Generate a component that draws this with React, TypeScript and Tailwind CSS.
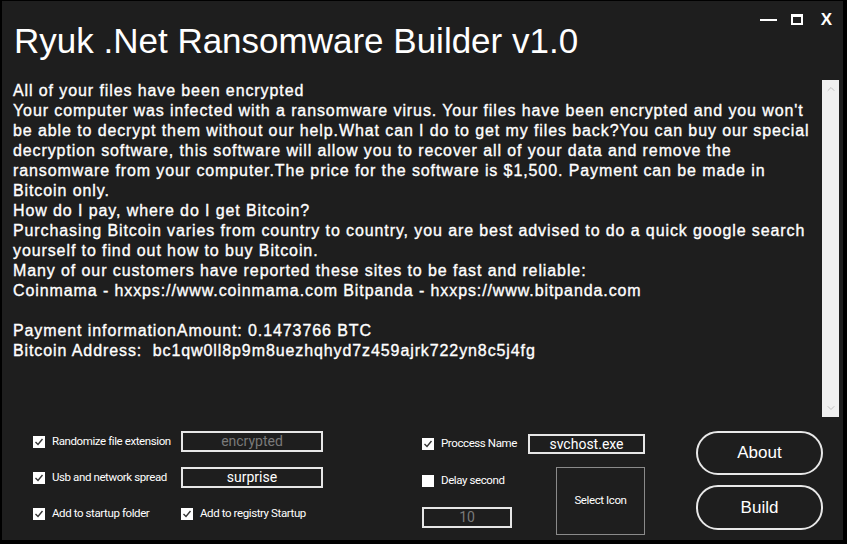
import { ChevronUp, ChevronDown } from 'lucide-react';

const message = [
  'All of your files have been encrypted',
  "Your computer was infected with a ransomware virus. Your files have been encrypted and you won't",
  'be able to decrypt them without our help.What can I do to get my files back?You can buy our special',
  'decryption software, this software will allow you to recover all of your data and remove the',
  'ransomware from your computer.The price for the software is $1,500. Payment can be made in',
  'Bitcoin only.',
  'How do I pay, where do I get Bitcoin?',
  'Purchasing Bitcoin varies from country to country, you are best advised to do a quick google search',
  'yourself to find out how to buy Bitcoin.',
  'Many of our customers have reported these sites to be fast and reliable:',
  'Coinmama - hxxps://www.coinmama.com Bitpanda - hxxps://www.bitpanda.com',
  '',
  'Payment informationAmount: 0.1473766 BTC',
  'Bitcoin Address:  bc1qw0ll8p9m8uezhqhyd7z459ajrk722yn8c5j4fg',
];

function CheckBox({ checked, label }: { checked: boolean; label: string }) {
  return (
    <div className="flex items-center gap-[7px]">
      <div className="w-[12px] h-[12px] bg-white flex items-center justify-center">
        {checked && (
          <svg width="10" height="10" viewBox="0 0 10 10">
            <polyline points="1.5,5 4,7.5 8.5,2" fill="none" stroke="#333" strokeWidth="1.4" />
          </svg>
        )}
      </div>
      <span className="text-[11.5px] tracking-[-0.4px] text-white font-['Roboto',sans-serif] whitespace-nowrap">{label}</span>
    </div>
  );
}

function TextBox({ value, muted, className }: { value: string; muted?: boolean; className: string }) {
  return (
    <div
      className={`border-2 border-[#e6e6e6] bg-[#1e1e1e] flex items-center justify-center text-[14px] font-['Roboto',sans-serif] ${
        muted ? 'text-[#7a7a7a]' : 'text-white'
      } ${className}`}
    >
      {value}
    </div>
  );
}

export default function App() {
  return (
    <div className="w-[847px] h-[544px] bg-[#1e1e1e] border-l-2 border-t border-r-4 border-b-4 border-black flex flex-col font-['Liberation_Sans',Arial,sans-serif] text-white overflow-hidden">
      {/* Header */}
      <div className="flex justify-between items-start h-[79px]">
        <h1 className="text-[35px] leading-none ml-[12px] mt-[22px] whitespace-nowrap">Ryuk .Net Ransomware Builder v1.0</h1>
        <div className="flex items-center mt-[10px] mr-[11px]">
          <div className="w-[17px] h-[2px] bg-white mt-[1px]" />
          <div className="w-[12px] h-[11px] ml-[14px] border-2 border-white border-t-[3px]" />
          <span className="text-[17px] font-bold leading-none ml-[18px]">X</span>
        </div>
      </div>

      {/* Message box */}
      <div className="flex ml-[8px] mr-[4px] h-[337px]">
        <div className="flex-1 pl-[3px] pt-[1px] text-[16px] tracking-[0.9px] [-webkit-text-stroke:0.35px_white] leading-[20px] whitespace-pre overflow-hidden">
          {message.map((line, i) => (
            <div key={i} className="h-[20px]">{line}</div>
          ))}
        </div>
        <div className="w-[17px] bg-[#f0f0f0] flex flex-col justify-between items-center py-[3px]">
          <ChevronUp className="w-[12px] h-[12px] text-[#c2c2c2]" strokeWidth={2} />
          <ChevronDown className="w-[12px] h-[12px] text-[#c2c2c2]" strokeWidth={2} />
        </div>
      </div>

      {/* Options */}
      <div className="flex mt-[14px]">
        <div className="flex flex-col ml-[31px] w-[389px]">
          <div className="flex items-center h-[21px]">
            <div className="w-[148px]"><CheckBox checked label="Randomize file extension" /></div>
            <TextBox value="encrypted" muted className="w-[142px] h-[21px]" />
          </div>
          <div className="flex items-center h-[21px] mt-[15px]">
            <div className="w-[148px]"><CheckBox checked label="Usb and network spread" /></div>
            <TextBox value="surprise" className="w-[142px] h-[21px]" />
          </div>
          <div className="flex items-center h-[21px] mt-[15px]">
            <div className="w-[148px]"><CheckBox checked label="Add to startup folder" /></div>
            <CheckBox checked label="Add to registry Startup" />
          </div>
        </div>

        <div className="flex flex-col w-[274px]">
          <div className="flex items-center mt-[3px] h-[20px]">
            <div className="w-[106px]"><CheckBox checked label="Proccess Name" /></div>
            <TextBox value="svchost.exe" className="w-[117px] h-[20px]" />
          </div>
          <div className="flex mt-[13px]">
            <div className="flex flex-col w-[134px]">
              <div className="mt-[5px]"><CheckBox checked={false} label="Delay second" /></div>
              <TextBox value="10" muted className="w-[90px] h-[21px] mt-[18px]" />
            </div>
            <button className="w-[89px] h-[68px] border border-[#8a8a8a] text-[11.5px] tracking-[-0.4px] font-['Roboto',sans-serif] text-white">
              Select Icon
            </button>
          </div>
        </div>

        <div className="flex flex-col gap-[10px]">
          <button className="w-[127px] h-[44px] rounded-[22px] border-2 border-[#e8e8e8] text-[17px] text-white">About</button>
          <button className="w-[127px] h-[45px] rounded-[22px] border-2 border-[#e8e8e8] text-[17px] text-white">Build</button>
        </div>
      </div>
    </div>
  );
}
